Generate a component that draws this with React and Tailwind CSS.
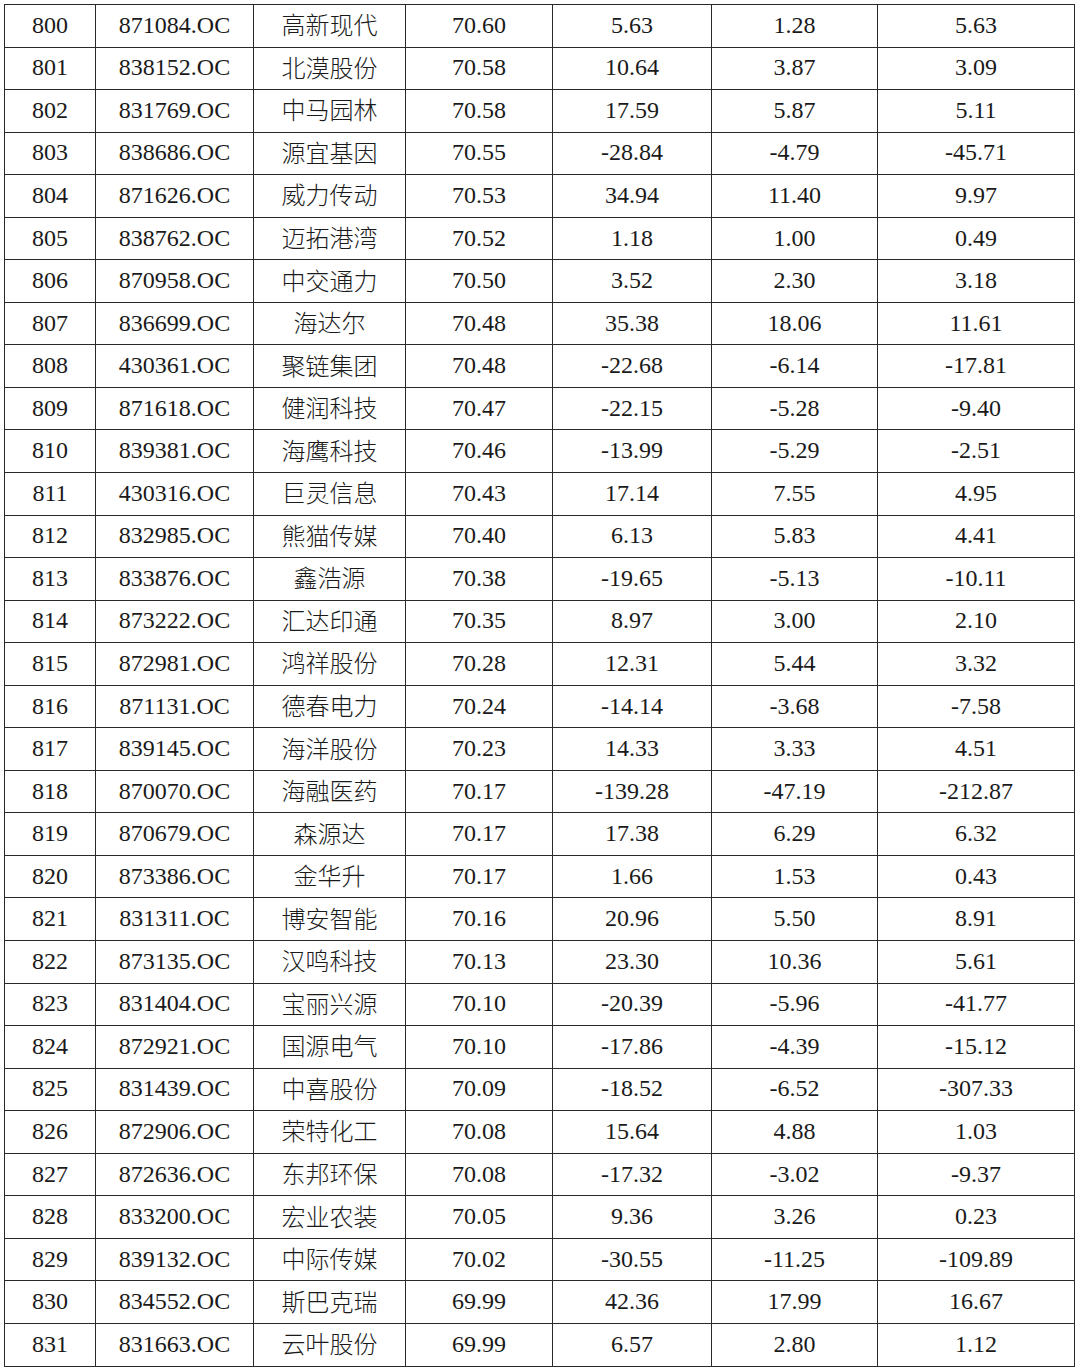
const rows = [
  ["800", "871084.OC", "高新现代", "70.60", "5.63", "1.28", "5.63"],
  ["801", "838152.OC", "北漠股份", "70.58", "10.64", "3.87", "3.09"],
  ["802", "831769.OC", "中马园林", "70.58", "17.59", "5.87", "5.11"],
  ["803", "838686.OC", "源宜基因", "70.55", "-28.84", "-4.79", "-45.71"],
  ["804", "871626.OC", "威力传动", "70.53", "34.94", "11.40", "9.97"],
  ["805", "838762.OC", "迈拓港湾", "70.52", "1.18", "1.00", "0.49"],
  ["806", "870958.OC", "中交通力", "70.50", "3.52", "2.30", "3.18"],
  ["807", "836699.OC", "海达尔", "70.48", "35.38", "18.06", "11.61"],
  ["808", "430361.OC", "聚链集团", "70.48", "-22.68", "-6.14", "-17.81"],
  ["809", "871618.OC", "健润科技", "70.47", "-22.15", "-5.28", "-9.40"],
  ["810", "839381.OC", "海鹰科技", "70.46", "-13.99", "-5.29", "-2.51"],
  ["811", "430316.OC", "巨灵信息", "70.43", "17.14", "7.55", "4.95"],
  ["812", "832985.OC", "熊猫传媒", "70.40", "6.13", "5.83", "4.41"],
  ["813", "833876.OC", "鑫浩源", "70.38", "-19.65", "-5.13", "-10.11"],
  ["814", "873222.OC", "汇达印通", "70.35", "8.97", "3.00", "2.10"],
  ["815", "872981.OC", "鸿祥股份", "70.28", "12.31", "5.44", "3.32"],
  ["816", "871131.OC", "德春电力", "70.24", "-14.14", "-3.68", "-7.58"],
  ["817", "839145.OC", "海洋股份", "70.23", "14.33", "3.33", "4.51"],
  ["818", "870070.OC", "海融医药", "70.17", "-139.28", "-47.19", "-212.87"],
  ["819", "870679.OC", "森源达", "70.17", "17.38", "6.29", "6.32"],
  ["820", "873386.OC", "金华升", "70.17", "1.66", "1.53", "0.43"],
  ["821", "831311.OC", "博安智能", "70.16", "20.96", "5.50", "8.91"],
  ["822", "873135.OC", "汉鸣科技", "70.13", "23.30", "10.36", "5.61"],
  ["823", "831404.OC", "宝丽兴源", "70.10", "-20.39", "-5.96", "-41.77"],
  ["824", "872921.OC", "国源电气", "70.10", "-17.86", "-4.39", "-15.12"],
  ["825", "831439.OC", "中喜股份", "70.09", "-18.52", "-6.52", "-307.33"],
  ["826", "872906.OC", "荣特化工", "70.08", "15.64", "4.88", "1.03"],
  ["827", "872636.OC", "东邦环保", "70.08", "-17.32", "-3.02", "-9.37"],
  ["828", "833200.OC", "宏业农装", "70.05", "9.36", "3.26", "0.23"],
  ["829", "839132.OC", "中际传媒", "70.02", "-30.55", "-11.25", "-109.89"],
  ["830", "834552.OC", "斯巴克瑞", "69.99", "42.36", "17.99", "16.67"],
  ["831", "831663.OC", "云叶股份", "69.99", "6.57", "2.80", "1.12"],
];

const widths = ["w-[91px]", "w-[158px]", "w-[152px]", "w-[147px]", "w-[159px]", "w-[166px]", "w-[197px]"];

export default function App() {
  return (
    <div className="w-[1080px] h-[1369px] bg-white pt-[4px] pl-[4px] font-['Liberation_Serif','Noto_Sans_CJK_SC',serif] text-[#1a1a1a]">
      <table className="table-fixed border-collapse w-[1070px] text-[24px] leading-none">
        <colgroup>
          {widths.map((w, i) => (
            <col key={i} className={w} />
          ))}
        </colgroup>
        <tbody>
          {rows.map((r) => (
            <tr key={r[0]} className="h-[42.56px]">
              {r.map((c, j) => (
                <td
                  key={j}
                  className={`border-[1.5px] border-[#2a2a2a] text-center align-middle ${
                    j === 2
                      ? "font-['Noto_Sans_CJK_SC',sans-serif] text-[24px] font-light pt-0 pb-[3px] px-0"
                      : "pt-0 pb-[2px] px-0"
                  }`}
                >
                  {c}
                </td>
              ))}
            </tr>
          ))}
        </tbody>
      </table>
    </div>
  );
}
